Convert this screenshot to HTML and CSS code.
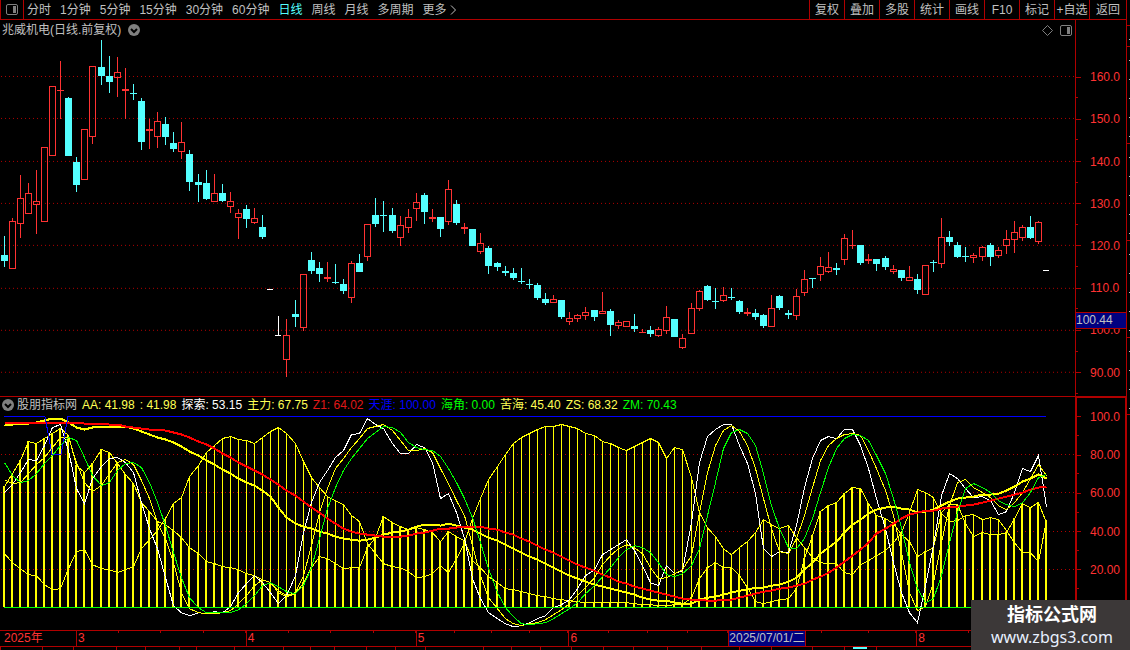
FILE: index.html
```html
<!DOCTYPE html>
<html lang="zh-CN">
<head>
    <meta charset="UTF-8">
    <title>兆威机电 日线</title>
    <link rel="stylesheet" href="styles.css">
</head>
<body>
<div class="app">
    <div class="main">
        <header class="toolbar">
            <button class="layout-btn" type="button" aria-label="布局">
                <svg class="icon-layout" viewBox="0 0 12 11" width="12" height="11">
                    <rect x="0.5" y="0.5" width="11" height="10" rx="1.5"/>
                    <rect class="solid" x="7" y="2" width="3" height="7"/>
                </svg>
            </button>
            <nav class="periods">
                <a href="#">分时</a>
                <a href="#">1分钟</a>
                <a href="#">5分钟</a>
                <a href="#">15分钟</a>
                <a href="#">30分钟</a>
                <a href="#">60分钟</a>
                <a href="#" class="active">日线</a>
                <a href="#">周线</a>
                <a href="#">月线</a>
                <a href="#">多周期</a>
                <a href="#" class="more">更多
                    <svg class="chevron" viewBox="0 0 6 10" width="6" height="10"><path d="M1 0.5l4.5 4.5-4.5 4.5"/></svg>
                </a>
            </nav>
            <div class="actions">
                <button type="button">复权</button>
                <button type="button">叠加</button>
                <button type="button">多股</button>
                <button type="button">统计</button>
                <button type="button">画线</button>
                <button type="button">F10</button>
                <button type="button">标记</button>
                <button type="button">+自选</button>
                <button type="button">返回</button>
            </div>
        </header>

        <section class="panel price">
            <div class="plot">
                <div class="title">
                    <span>兆威机电(日线.前复权)</span>
                    <button class="drop" type="button" aria-label="菜单">
                        <svg viewBox="0 0 12 12" width="12" height="12"><circle cx="6" cy="6" r="6"/><path d="M3 5l3 3 3-3"/></svg>
                    </button>
                    <div class="tools">
                        <svg class="icon-diamond" viewBox="0 0 11 11" width="11" height="11"><path d="M5.5 0.5l5 5-5 5-5-5z"/></svg>
                        <svg class="icon-layout" viewBox="0 0 12 11" width="12" height="11">
                            <rect x="0.5" y="0.5" width="11" height="10" rx="1.5"/>
                            <rect class="solid" x="7" y="2" width="3" height="7"/>
                        </svg>
                    </div>
                </div>
                <svg id="candles" class="chart" viewBox="0 40 1075 356" preserveAspectRatio="none"></svg>
            </div>
            <div class="axis">
                <span>160.0</span>
                <span>150.0</span>
                <span>140.0</span>
                <span>130.0</span>
                <span>120.0</span>
                <span>110.0</span>
                <span>100.0</span>
                <span>90.00</span>
                <div class="cursor-price">100.44</div>
            </div>
        </section>

        <section class="panel indicator">
            <div class="plot">
                <div class="legend">
                    <button class="drop" type="button" aria-label="指标菜单">
                        <svg viewBox="0 0 12 12" width="12" height="12"><circle cx="6" cy="6" r="6"/><path d="M3 5l3 3 3-3"/></svg>
                    </button>
                    <span>股朋指标网</span>
                    <span class="yellow">AA: 41.98</span>
                    <span class="yellow">: 41.98</span>
                    <span class="white">探索: 53.15</span>
                    <span class="yellow">主力: 67.75</span>
                    <span class="red">Z1: 64.02</span>
                    <span class="blue">天涯: 100.00</span>
                    <span class="green">海角: 0.00</span>
                    <span class="yellow">苦海: 45.40</span>
                    <span class="yellow">ZS: 68.32</span>
                    <span class="green">ZM: 70.43</span>
                </div>
                <svg id="lines" class="chart" viewBox="0 18 1075 217" preserveAspectRatio="none"></svg>
            </div>
            <div class="axis">
                <span>100.0</span>
                <span>80.00</span>
                <span>60.00</span>
                <span>40.00</span>
                <span>20.00</span>
            </div>
        </section>

        <div class="dates">
            <div class="month year">2025年</div>
            <div class="month march">3</div>
            <div class="month april">4</div>
            <div class="month may">5</div>
            <div class="month june">6</div>
            <div class="month july"><span class="cursor-date">2025/07/01/二</span></div>
            <div class="month august">8</div>
        </div>
        <div class="tabs" id="tabs"></div>
    </div>

    <aside class="rail">
        <div></div>
        <div></div>
        <div></div>
        <div></div>
        <div></div>
        <div></div>
        <div></div>
    </aside>

    <div class="watermark">
        <strong>指标公式网</strong>
        <span>www.zbgs3.com</span>
    </div>
</div>
<script src="chart.js"></script>
</body>
</html>
```
FILE: styles.css
```css
* {
    box-sizing: border-box;
    margin: 0;
    padding: 0;
}

body {
    background: #000;
    color: #c0c0c0;
    font: 12px/16px "Liberation Sans", "Noto Sans CJK SC", sans-serif;
    overflow: hidden;
}

button {
    background: none;
    border: 0;
    color: inherit;
    font: inherit;
}

a {
    color: inherit;
    text-decoration: none;
}

.app {
    position: relative;
    display: flex;
    height: 100vh;
}

.main {
    flex: 1;
    display: flex;
    flex-direction: column;
    min-width: 0;
}

/* toolbar */
.toolbar {
    display: flex;
    height: 20px;
    border-bottom: 1px solid #b00000;
    white-space: nowrap;
}

.layout-btn {
    display: flex;
    align-items: center;
    justify-content: center;
    width: 24px;
    border: solid #b00000;
    border-width: 0 1px;
}

.icon-layout {
    fill: none;
    stroke: #808080;
}

.icon-layout .solid {
    fill: #808080;
    stroke: none;
}

.periods {
    display: flex;
    align-items: center;
    gap: 9px;
    padding-left: 3px;
}

.periods .active {
    color: #54ffff;
}

.periods .more {
    display: flex;
    align-items: center;
    gap: 3px;
}

.chevron {
    fill: none;
    stroke: #c0c0c0;
}

.actions {
    display: flex;
    margin-left: auto;
}

.actions button {
    width: 35px;
    border-left: 1px solid #b00000;
}

.actions button:last-child {
    width: 37px;
}

/* chart panels */
.panel {
    display: flex;
    min-height: 0;
    border-bottom: 1px solid #b00000;
}

.price {
    flex: 377;
}

.indicator {
    flex: 234;
}

.plot {
    flex: 1;
    display: flex;
    flex-direction: column;
    min-width: 0;
}

.chart {
    flex: 1;
    display: block;
    width: 100%;
    min-height: 0;
    shape-rendering: crispEdges;
}

.title {
    display: flex;
    align-items: center;
    gap: 7px;
    height: 20px;
    padding: 0 3px 0 2px;
}

.tools {
    display: flex;
    align-items: center;
    gap: 7px;
    margin-left: auto;
}

.icon-diamond {
    fill: none;
    stroke: #808080;
}

.drop {
    display: flex;
}

.drop circle {
    fill: #808080;
}

.drop path {
    fill: none;
    stroke: #000;
    stroke-width: 2;
}

.legend {
    display: flex;
    align-items: center;
    gap: 5px;
    height: 16px;
    padding-left: 2px;
    white-space: nowrap;
}

.legend .drop {
    margin-right: -2px;
}

.yellow {
    color: #ffff54;
}

.white {
    color: #fff;
}

.red {
    color: #e01818;
}

.blue {
    color: #0000ff;
}

.green {
    color: #00ff00;
}

/* value axis */
.axis {
    position: relative;
    display: flex;
    flex-direction: column;
    width: 51px;
    border-left: 1px solid #b00000;
    color: #ff3232;
}

.price .axis {
    padding: 36px 0 2px;
}

.indicator .axis {
    padding-bottom: 41px;
    border: solid #b00000;
    border-width: 1px 1px 0 2px;
}

.axis span {
    flex: 1;
    display: flex;
    align-items: center;
    gap: 9px;
    background: linear-gradient(#b00000, #b00000) left bottom / 2px 1px no-repeat;
}

.axis span::before {
    content: "";
    width: 5px;
    height: 1px;
    background: #b00000;
}

.indicator .axis span::before {
    width: 4px;
}

.cursor-price {
    position: absolute;
    top: 78%;
    left: 0;
    right: 0;
    margin-top: -1px;
    border: solid #b00000;
    border-width: 1px 0;
    background: #000080;
    color: #c0c0c0;
    line-height: 15px;
}

/* date axis */
.dates {
    display: flex;
    height: 16px;
    border-bottom: 1px solid #b00000;
    color: #ff3232;
    line-height: 15px;
}

.month {
    flex: 168 1 0;
    min-width: 0;
    padding-left: 1px;
    border-left: 1px solid #b00000;
    background: repeating-linear-gradient(to right, transparent 0, transparent calc(25% - 1px), #b00000 calc(25% - 1px), #b00000 25%) top / 100% 2px no-repeat;
}

.year {
    flex-grow: 72;
    padding-left: 4px;
    border: 0;
    background: none;
}

.may {
    flex-grow: 151;
}

.june {
    flex-grow: 158;
}

.july {
    flex-grow: 187;
    padding: 0;
}

.august {
    flex-grow: 208;
}

.cursor-date {
    display: inline-block;
    border-right: 1px solid #b00000;
    background: #000080;
    color: #c0c0c0;
}

.tabs {
    display: flex;
    height: 3px;
    overflow: hidden;
}

.tabs div {
    border-left: 1px solid #b00000;
}

.tabs .active {
    background: linear-gradient(#54ffff, #54ffff) center top / 14px 2px no-repeat;
}

/* cut-off side panel */
.rail {
    display: flex;
    flex-direction: column;
    width: 4px;
    border-left: 1px solid #b00000;
}

.rail div {
    flex: 97;
    border-bottom: 1px solid #b00000;
    background: repeating-linear-gradient(transparent 0, transparent 13px, #c0c0c0 13px, #c0c0c0 14px, transparent 14px, transparent 19px) right / 1px 100% no-repeat;
}

.rail div:first-child {
    flex: 25;
    background: none;
}

.rail div:nth-child(2) {
    flex: 20;
}

.rail div:nth-child(6) {
    flex: 77;
}

.rail div:last-child {
    flex: 237;
    border: 0;
    background: none;
}

.watermark {
    position: absolute;
    right: 0;
    bottom: 0;
    padding: 3px 17px 2px 20px;
    background: #3c3838;
    color: #fff;
    text-align: center;
}

.watermark strong,
.watermark span {
    display: block;
}

.watermark strong {
    font-size: 18px;
    line-height: 24px;
}

.watermark span {
    color: #e8f0ff;
    font: 16px/21px "Noto Sans", "Open Sans", sans-serif;
}
```
FILE: chart.js
```js
var NS = 'http://www.w3.org/2000/svg';
var RED = '#ff3232';
var CYAN = '#54ffff';
var YELLOW = '#ffff00';

// high, body top, body bottom, low, kind (r = up, c = down, w = flat)
var candles = [
    [236, 255, 261, 267, 'c'], [218, 221, 269, 269, 'r'], [175, 198, 224, 238, 'r'], [183, 193, 214, 214, 'r'],
    [170, 201, 205, 234, 'r'], [147, 147, 222, 222, 'r'], [86, 86, 156, 156, 'r'], [61, 90, 91, 119, 'r'],
    [97, 98, 156, 156, 'c'], [157, 162, 185, 192, 'c'], [129, 129, 180, 180, 'r'], [66, 66, 137, 144, 'r'],
    [40, 67, 76, 85, 'c'], [56, 76, 82, 93, 'c'], [57, 72, 78, 97, 'r'], [68, 89, 91, 119, 'r'],
    [84, 93, 94, 100, 'c'], [98, 101, 142, 150, 'c'], [119, 129, 131, 149, 'r'], [112, 121, 137, 148, 'r'],
    [117, 124, 137, 145, 'c'], [132, 143, 149, 152, 'c'], [122, 142, 152, 159, 'r'], [150, 154, 182, 191, 'c'],
    [174, 182, 185, 202, 'c'], [170, 183, 199, 200, 'c'], [174, 193, 202, 202, 'r'], [184, 193, 201, 202, 'c'],
    [192, 201, 207, 213, 'r'], [209, 213, 218, 239, 'r'], [205, 209, 219, 228, 'c'], [208, 218, 223, 224, 'r'],
    [215, 227, 237, 239, 'c'], [289, 289, 290, 290, 'w'], [316, 335, 336, 336, 'w'], [319, 335, 360, 377, 'r'],
    [300, 314, 317, 327, 'c'], [274, 274, 328, 331, 'r'], [252, 260, 271, 274, 'c'], [262, 268, 274, 282, 'c'],
    [262, 277, 279, 282, 'r'], [264, 282, 283, 284, 'c'], [279, 284, 291, 294, 'c'], [261, 263, 298, 303, 'r'],
    [254, 263, 272, 272, 'c'], [224, 224, 257, 261, 'r'], [198, 215, 224, 227, 'c'], [201, 215, 216, 232, 'c'],
    [208, 215, 231, 233, 'c'], [216, 225, 238, 246, 'r'], [209, 217, 228, 233, 'r'], [193, 202, 209, 221, 'r'],
    [193, 195, 212, 224, 'c'], [209, 217, 219, 222, 'r'], [217, 217, 229, 237, 'c'], [180, 189, 222, 225, 'r'],
    [200, 204, 223, 225, 'c'], [223, 227, 229, 234, 'r'], [229, 229, 246, 246, 'c'], [233, 243, 252, 254, 'r'],
    [246, 248, 266, 274, 'c'], [262, 263, 267, 271, 'c'], [266, 271, 273, 276, 'c'], [268, 273, 278, 280, 'c'],
    [268, 281, 282, 284, 'c'], [279, 284, 285, 289, 'c'], [283, 285, 298, 300, 'c'], [293, 299, 303, 305, 'c'],
    [295, 299, 303, 303, 'r'], [300, 300, 317, 319, 'c'], [312, 318, 322, 325, 'r'], [314, 315, 319, 322, 'r'],
    [307, 312, 316, 320, 'r'], [310, 310, 317, 321, 'c'], [292, 311, 314, 314, 'r'], [309, 311, 325, 336, 'c'],
    [320, 322, 326, 329, 'r'], [321, 321, 327, 327, 'r'], [314, 326, 329, 332, 'c'], [329, 332, 333, 333, 'r'],
    [326, 330, 334, 337, 'c'], [327, 329, 336, 337, 'r'], [306, 317, 331, 334, 'r'], [319, 319, 337, 337, 'c'],
    [334, 338, 348, 349, 'r'], [303, 308, 334, 334, 'r'], [290, 291, 309, 311, 'r'], [285, 286, 300, 301, 'c'],
    [288, 301, 302, 309, 'c'], [287, 295, 301, 302, 'r'], [288, 297, 298, 300, 'c'], [300, 301, 312, 314, 'c'],
    [308, 312, 314, 316, 'r'], [309, 313, 317, 320, 'c'], [314, 315, 326, 328, 'c'], [295, 308, 327, 327, 'r'],
    [295, 296, 308, 310, 'c'], [310, 313, 315, 319, 'c'], [289, 296, 316, 320, 'r'], [270, 279, 293, 296, 'r'],
    [278, 278, 279, 288, 'c'], [257, 266, 275, 281, 'r'], [252, 267, 272, 273, 'r'], [263, 268, 270, 275, 'c'],
    [234, 238, 260, 265, 'r'], [230, 245, 246, 249, 'r'], [245, 245, 263, 265, 'c'], [254, 259, 261, 264, 'r'],
    [259, 259, 264, 271, 'c'], [256, 258, 267, 270, 'c'], [265, 269, 272, 274, 'r'], [270, 270, 278, 281, 'c'],
    [266, 277, 281, 281, 'r'], [274, 279, 290, 294, 'c'], [265, 265, 295, 295, 'r'], [260, 262, 263, 272, 'c'],
    [218, 237, 264, 268, 'r'], [231, 237, 242, 246, 'c'], [242, 245, 257, 258, 'c'], [247, 256, 257, 262, 'c'],
    [253, 255, 258, 263, 'r'], [246, 247, 257, 261, 'r'], [243, 245, 257, 266, 'c'], [247, 250, 256, 258, 'r'],
    [230, 239, 246, 254, 'r'], [221, 232, 240, 253, 'r'], [225, 227, 238, 241, 'r'], [216, 227, 238, 239, 'c'],
    [221, 222, 242, 244, 'r'], [270, 270, 271, 271, 'w']
];

// indicator series, one value per day, three units to a pixel
var barsNear = [273, 233, 195, 139, 143, 130, 115, 100, 120, 210, 232, 203, 163, 170, 205, 237, 263, 320, 347, 378,
    388, 405, 425, 455, 475, 497, 505, 513, 517, 523, 533, 540, 552, 562, 590, 602, 595, 560, 515, 483,
    490, 503, 518, 517, 517, 455, 425, 363, 380, 393, 402, 395, 402, 410, 437, 408, 423, 435, 495, 515,
    543, 560, 578, 583, 588, 593, 600, 603, 608, 613, 615, 618, 620, 620, 621, 621, 622, 622, 625, 627,
    627, 630, 630, 628, 628, 605, 550, 515, 500, 515, 515, 540, 575, 618, 625, 618, 613, 608, 580, 490,
    420, 348, 330, 320, 293, 277, 280, 325, 360, 370, 385, 418, 437, 483, 468, 455, 350, 327, 328, 385,
    422, 412, 416, 418, 410, 370, 325, 335, 320, 380];
var barsFar = [475, 500, 520, 537, 540, 567, 583, 578, 520, 467, 463, 507, 518, 523, 531, 523, 512, 458, 433, 405,
    370, 325, 305, 243, 210, 172, 150, 130, 124, 133, 136, 143, 125, 108, 95, 115, 143, 197, 247, 277,
    302, 315, 328, 360, 377, 443, 475, 503, 512, 515, 527, 545, 542, 533, 510, 530, 490, 440, 370, 308,
    253, 213, 177, 145, 127, 115, 103, 94, 94, 88, 92, 100, 113, 119, 137, 145, 157, 166, 154, 142,
    130, 140, 188, 157, 162, 245, 350, 395, 423, 460, 477, 455, 438, 412, 372, 388, 400, 390, 425, 455,
    485, 502, 505, 505, 530, 537, 508, 495, 480, 465, 440, 410, 350, 283, 292, 305, 355, 378, 375, 360,
    358, 372, 365, 372, 405, 440, 470, 472, 497, 375];
var white = [292, 268, 230, 193, 195, 150, 95, 88, 165, 280, 325, 250, 212, 190, 185, 200, 230, 320, 400, 460,
    545, 630, 650, 661, 650, 653, 649, 650, 633, 590, 565, 540, 560, 590, 623, 600, 540, 410, 320, 260,
    225, 187, 165, 118, 115, 70, 87, 98, 145, 175, 175, 148, 157, 200, 310, 293, 350, 430, 550, 610,
    650, 670, 685, 694, 690, 680, 670, 661, 636, 628, 612, 580, 540, 523, 478, 462, 447, 433, 465, 510,
    560, 570, 510, 535, 525, 380, 200, 122, 103, 86, 86, 150, 205, 295, 460, 483, 468, 472, 390, 275,
    190, 135, 122, 130, 103, 103, 150, 220, 310, 400, 500, 590, 650, 680, 570, 450, 300, 235, 248, 280,
    307, 303, 315, 357, 349, 290, 220, 227, 180, 333];
var yellow = [253, 265, 260, 235, 208, 185, 155, 125, 125, 200, 262, 288, 270, 235, 200, 193, 207, 255, 310, 380,
    430, 500, 590, 640, 650, 655, 653, 652, 645, 625, 600, 570, 553, 560, 585, 600, 590, 540, 450, 350,
    280, 220, 190, 155, 130, 100, 92, 86, 105, 135, 165, 165, 160, 170, 220, 265, 315, 360, 450, 540,
    605, 640, 670, 685, 691, 685, 680, 672, 658, 643, 625, 600, 575, 545, 508, 480, 460, 448, 455, 475,
    515, 548, 545, 535, 523, 480, 350, 230, 150, 105, 90, 108, 150, 220, 310, 400, 467, 475, 430, 360,
    275, 195, 150, 130, 117, 113, 120, 165, 220, 285, 360, 470, 590, 645, 633, 560, 440, 330, 262, 253,
    275, 290, 305, 330, 342, 320, 290, 250, 207, 240];
var green = [200, 240, 262, 255, 235, 205, 180, 150, 125, 135, 185, 240, 270, 260, 225, 203, 200, 215, 260, 320,
    390, 470, 545, 605, 637, 650, 652, 652, 650, 643, 625, 600, 570, 560, 573, 588, 595, 570, 515, 430,
    340, 275, 225, 190, 160, 130, 110, 92, 96, 110, 140, 157, 162, 166, 183, 220, 260, 310, 365, 440,
    520, 590, 635, 663, 683, 687, 685, 680, 670, 655, 640, 620, 595, 570, 542, 515, 487, 463, 451, 456,
    472, 502, 537, 542, 535, 510, 460, 360, 260, 160, 110, 102, 115, 150, 235, 330, 400, 455, 460, 430,
    370, 290, 215, 160, 130, 118, 120, 135, 180, 235, 310, 395, 500, 580, 622, 610, 540, 440, 350, 280,
    265, 275, 290, 315, 328, 333, 320, 290, 245, 237];
var trendFast = [90, 88, 85, 83, 80, 76, 70, 69, 80, 95, 102, 95, 92, 92, 93, 94, 98, 108, 118, 125,
    132, 142, 152, 167, 180, 195, 208, 222, 235, 248, 262, 270, 285, 302, 335, 365, 383, 393, 400, 407,
    415, 422, 430, 433, 435, 432, 425, 416, 412, 408, 402, 392, 388, 387, 390, 385, 390, 397, 403, 413,
    425, 436, 448, 460, 470, 482, 493, 505, 515, 528, 540, 550, 558, 566, 572, 578, 585, 591, 597, 605,
    611, 614, 616, 621, 625, 624, 612, 606, 604, 597, 590, 585, 581, 577, 576, 571, 566, 558, 545, 522,
    500, 475, 455, 437, 410, 387, 372, 355, 343, 335, 332, 339, 342, 350, 348, 342, 330, 317, 310, 306,
    304, 298, 296, 293, 285, 273, 258, 250, 238, 248];
var trendSlow = [80, 80, 80, 80, 80, 80, 80, 80, 80, 81, 83, 84, 84, 86, 88, 93, 95, 98, 101, 103,
    106, 112, 118, 127, 137, 147, 160, 173, 185, 200, 213, 225, 238, 252, 267, 285, 300, 318, 335, 352,
    370, 385, 400, 408, 415, 418, 421, 423, 423, 423, 421, 415, 411, 406, 400, 398, 395, 392, 393, 394,
    398, 402, 410, 418, 428, 438, 449, 461, 471, 483, 495, 506, 517, 525, 538, 547, 557, 565, 572, 580,
    586, 592, 598, 604, 608, 611, 613, 614, 615, 613, 611, 607, 600, 594, 589, 585, 580, 576, 570, 563,
    553, 543, 530, 515, 497, 480, 462, 440, 415, 400, 385, 370, 357, 350, 346, 344, 340, 337, 333, 330,
    327, 322, 316, 310, 304, 297, 291, 283, 277, 272];

// days sit 8px apart, with one spare pixel every twelve days
function dayX(i) {
    return 4 + 8 * i + Math.floor(i / 12.12 + 0.042);
}

function add(svg, name, attrs) {
    var el = document.createElementNS(NS, name);
    for (var key in attrs) {
        el.setAttribute(key, attrs[key]);
    }
    svg.appendChild(el);
}

function box(svg, x, y, w, h, color) {
    if (h > 0) {
        add(svg, 'rect', {x: x, y: y, width: w, height: h, fill: color});
    }
}

function grid(svg, rows) {
    rows.forEach(function (y) {
        add(svg, 'path', {d: 'M1 ' + (y + 0.5) + 'H1075', stroke: '#b00000', 'stroke-dasharray': '1 3'});
    });
}

function drawCandles() {
    var svg = document.getElementById('candles');
    grid(svg, [76, 118, 161, 203, 245, 288, 330, 372]);
    candles.forEach(function (c, i) {
        var x = dayX(i);
        var color = c[4] === 'r' ? RED : c[4] === 'c' ? CYAN : '#fff';
        box(svg, x, c[0], 1, c[1] - c[0], color);
        box(svg, x, c[2], 1, c[3] - c[2], color);
        if (c[4] === 'r' && c[2] - c[1] > 2) {
            // hollow body, one pixel per side
            box(svg, x - 3, c[1], 7, 1, color);
            box(svg, x - 3, c[2] - 1, 7, 1, color);
            box(svg, x - 3, c[1], 1, c[2] - c[1], color);
            box(svg, x + 3, c[1], 1, c[2] - c[1], color);
        } else {
            box(svg, x - 3, c[1], c[4] === 'w' ? 6 : 7, c[2] - c[1], color);
        }
    });
}

function line(svg, data, color, width) {
    var points = data.map(function (v, i) {
        return (dayX(i) + 0.5) + ',' + (Math.round(v / 3) + 0.5);
    });
    add(svg, 'polyline', {points: points.join(' '), fill: 'none', stroke: color, 'stroke-width': width});
}

function drawLines() {
    var svg = document.getElementById('lines');
    var base = 212;
    grid(svg, [59, 97, 136, 174]);
    barsNear.forEach(function (v, i) {
        var near = Math.round(v / 3);
        var far = Math.round(barsFar[i] / 3);
        box(svg, dayX(i) - 1, near, 2, base - near, YELLOW);
        box(svg, dayX(i), far, 1, base - far, YELLOW);
    });
    line(svg, barsNear, YELLOW, 1);
    line(svg, barsFar, YELLOW, 1);
    line(svg, white, '#fff', 1);
    line(svg, yellow, YELLOW, 1);
    line(svg, trendFast, YELLOW, 2);
    line(svg, trendSlow, '#ff0000', 2);
    add(svg, 'path', {d: 'M4 21.5H45L52 59.5H61L68 21.5H1046', fill: 'none', stroke: '#0000ff'});
    add(svg, 'path', {d: 'M4 212.5H1046', stroke: '#00ff00'});
    line(svg, green, '#00ff00', 1);
}

function drawTabs() {
    var tabs = document.getElementById('tabs');
    var widths = [42, 31, 43, 28, 34, 17, 38, 49, 26, 24, 32, 28, 30, 58, 28, 29, 31, 31, 30, 34, 34, 38, 31, 41, 32, 32, 255];
    widths.forEach(function (w, i) {
        var tab = document.createElement('div');
        tab.style.flex = w + ' 1 0';
        if (i === 25) {
            tab.className = 'active';
        }
        tabs.appendChild(tab);
    });
}

drawCandles();
drawLines();
drawTabs();
```
